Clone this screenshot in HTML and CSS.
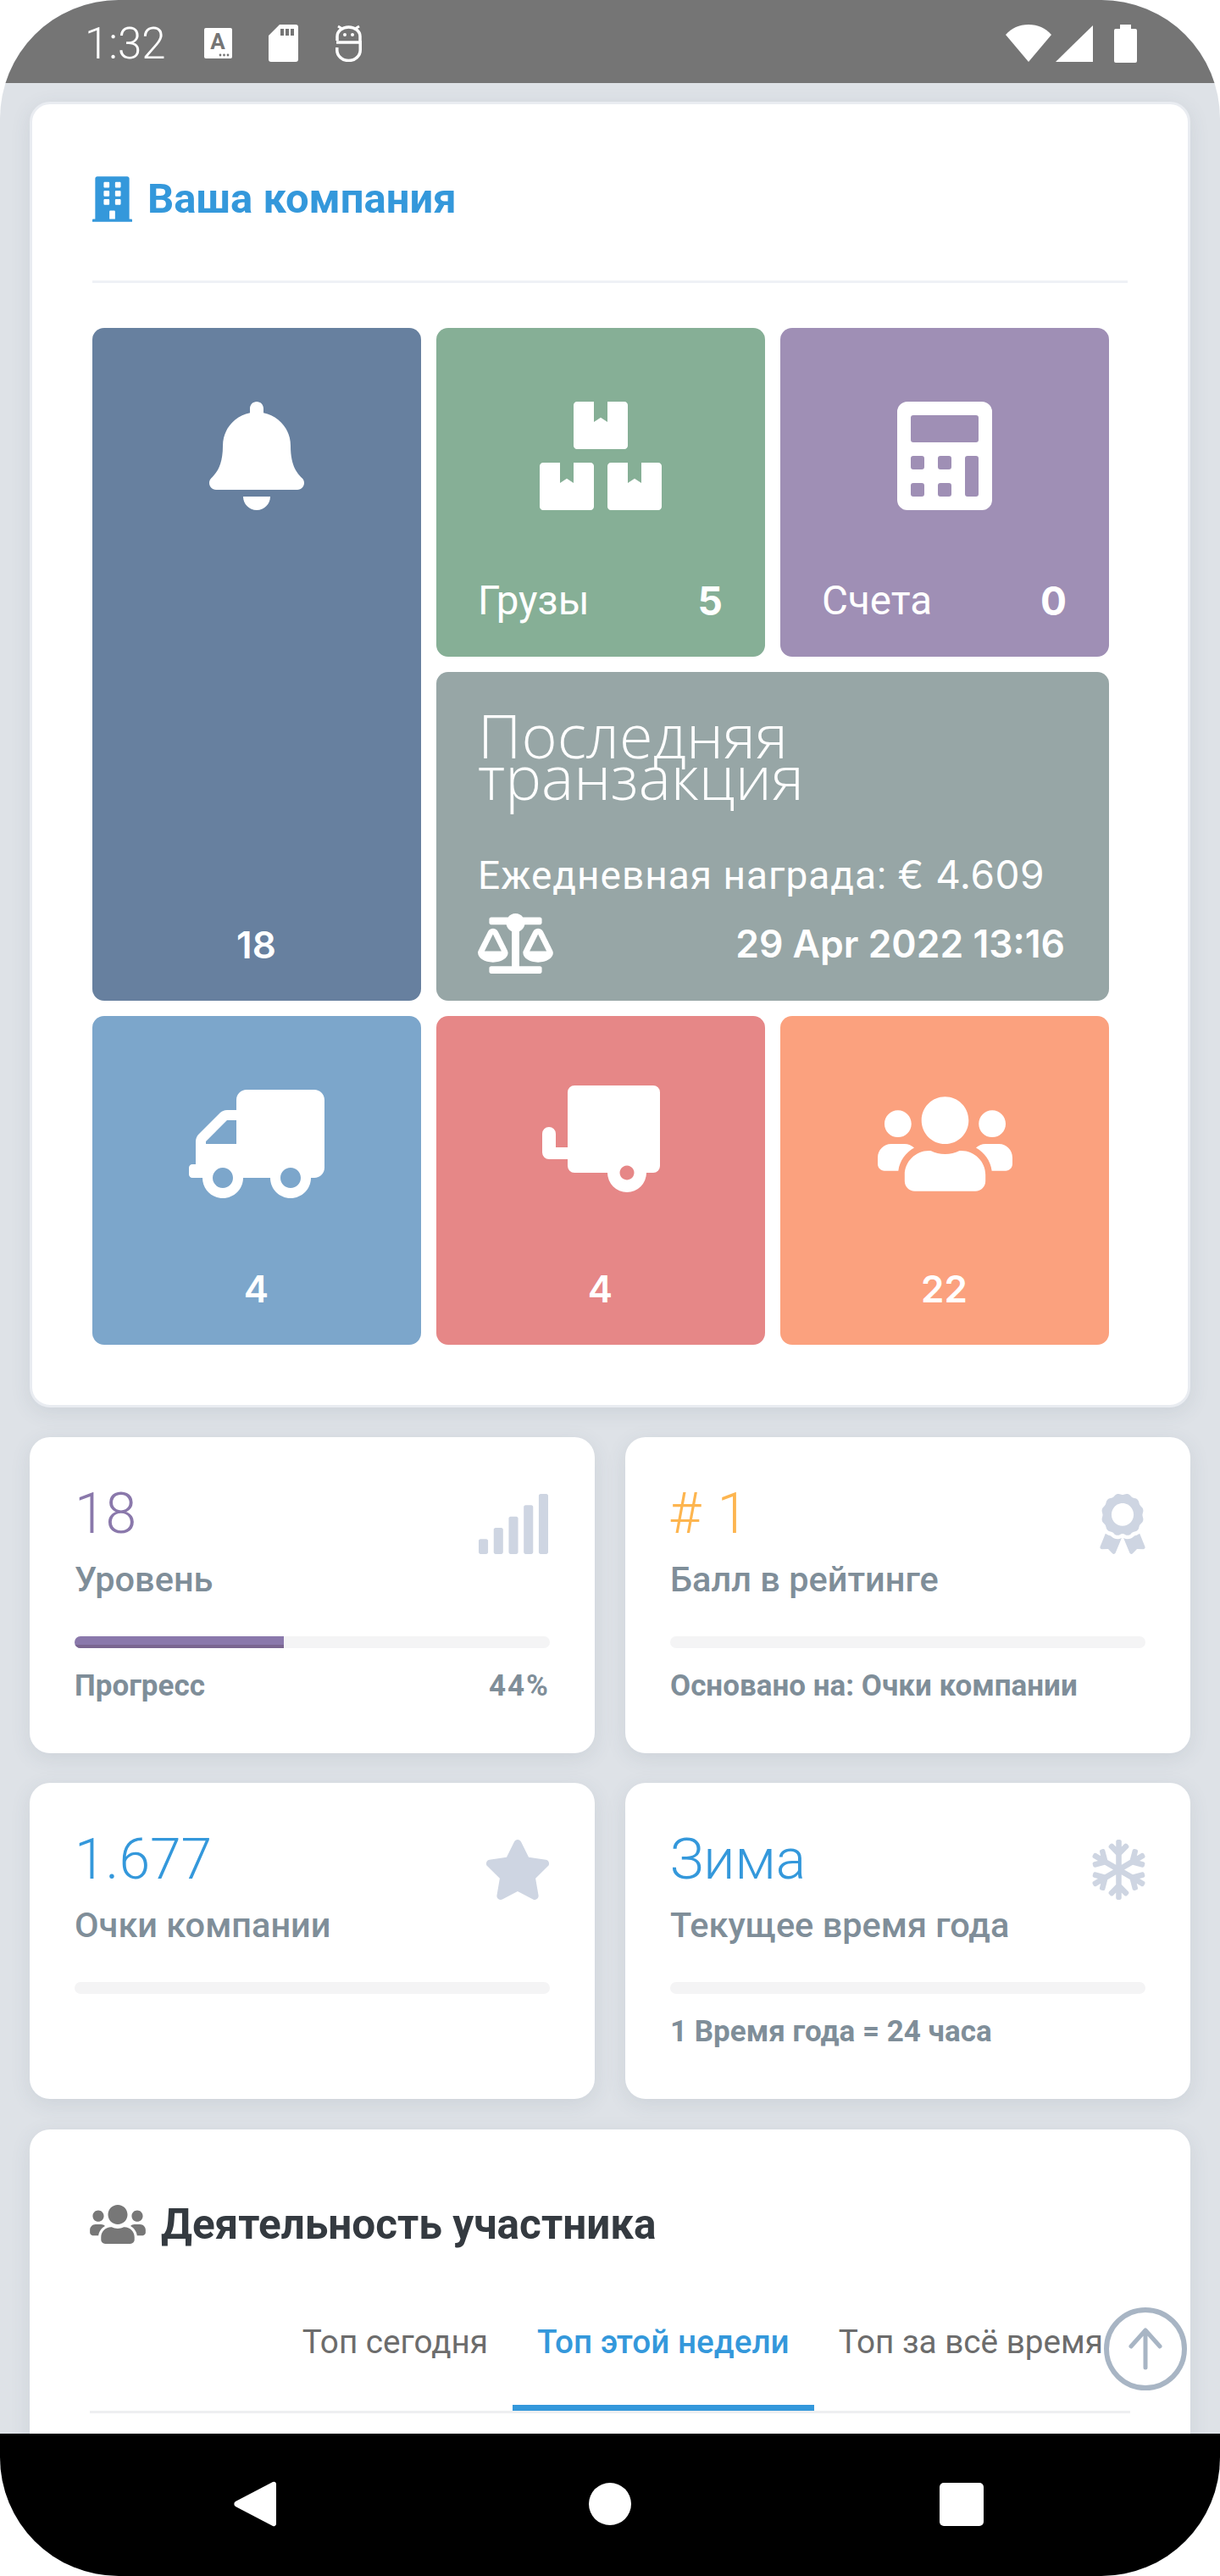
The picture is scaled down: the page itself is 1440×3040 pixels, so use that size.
FILE: index.html
```html
<!DOCTYPE html>
<html lang="ru">
<head>
    <meta charset="UTF-8">
    <meta name="viewport" content="width=device-width, initial-scale=1.0">
    <title>Ваша компания</title>
    <link rel="stylesheet" href="styles.css">
</head>
<body>
    <div class="screen">
        <!-- Android status bar -->
        <header class="status-bar">
            <div class="status-left">
                <span class="clock">1:32</span>
                <svg class="st-a" viewBox="0 0 33 36"><rect width="33" height="36" rx="2" fill="#fff"/><text x="16" y="25" text-anchor="middle" class="st-a-letter">A</text><circle cx="19" cy="32" r="1.4" fill="#757575"/><circle cx="23.500" cy="32" r="1.4" fill="#757575"/><circle cx="28" cy="32" r="1.4" fill="#757575"/></svg>
                <svg class="st-sd" viewBox="0 0 35 44"><path fill="#fff" fill-rule="evenodd" d="M13 0H32a3 3 0 0 1 3 3V41a3 3 0 0 1-3 3H3a3 3 0 0 1-3-3V13zM14 5V13H18V5zM20 5V13H24V5zM26 5V13H30V5z"/></svg>
                <svg class="st-bot" viewBox="0 0 31 44"><g fill="none" stroke="#fff" stroke-width="3.500"><path d="M2 19V14A13.500 11 0 0 1 29 14V19"/><path d="M1 21H29"/><path d="M1.750 27V30A13.750 12.500 0 0 0 29.250 30V19"/></g><circle cx="11" cy="12" r="2" fill="#fff"/><circle cx="20" cy="12" r="2" fill="#fff"/><path d="M3 2L8 5M28 2L23 5" stroke="#fff" stroke-width="3"/></svg>
            </div>
            <div class="status-right">
                <svg class="st-wifi" viewBox="0 0 54 44"><path fill="#fff" d="M27 44L0 12C7 4 16 0 27 0S47 4 54 12z"/></svg>
                <svg class="st-signal" viewBox="0 0 44 43"><path fill="#fff" d="M0 43L44 0V43z"/></svg>
                <svg class="st-battery" viewBox="0 0 27 45"><path fill="#fff" d="M7 0H20V5H25a2 2 0 0 1 2 2V43a2 2 0 0 1-2 2H2a2 2 0 0 1-2-2V7a2 2 0 0 1 2-2H7z"/></svg>
            </div>
        </header>

        <main class="content">
            <!-- Company -->
            <section class="card company-card">
                <div class="card-title">
                    <svg class="title-icon" viewBox="0 0 448 512"><path fill="#3498db" d="M436 480h-20V24c0-13.255-10.745-24-24-24H56C42.745 0 32 10.745 32 24v456H12c-6.627 0-12 5.373-12 12v20h448v-20c0-6.627-5.373-12-12-12zM128 76c0-6.627 5.373-12 12-12h40c6.627 0 12 5.373 12 12v40c0 6.627-5.373 12-12 12h-40c-6.627 0-12-5.373-12-12V76zm0 96c0-6.627 5.373-12 12-12h40c6.627 0 12 5.373 12 12v40c0 6.627-5.373 12-12 12h-40c-6.627 0-12-5.373-12-12v-40zm52 148h-40c-6.627 0-12-5.373-12-12v-40c0-6.627 5.373-12 12-12h40c6.627 0 12 5.373 12 12v40c0 6.627-5.373 12-12 12zm76 160h-64v-84c0-6.627 5.373-12 12-12h40c6.627 0 12 5.373 12 12v84zm64-172c0 6.627-5.373 12-12 12h-40c-6.627 0-12-5.373-12-12v-40c0-6.627 5.373-12 12-12h40c6.627 0 12 5.373 12 12v40zm0-96c0 6.627-5.373 12-12 12h-40c-6.627 0-12-5.373-12-12v-40c0-6.627 5.373-12 12-12h40c6.627 0 12 5.373 12 12v40zm0-96c0 6.627-5.373 12-12 12h-40c-6.627 0-12-5.373-12-12V76c0-6.627 5.373-12 12-12h40c6.627 0 12 5.373 12 12v40z"/></svg>
                    <h2>Ваша компания</h2>
                </div>
                <div class="tiles">
                    <a class="tile tile-tall tile-navy">
                        <svg class="tile-icon" viewBox="0 0 448 512"><path fill="#fff" d="M224 512c35.32 0 63.97-28.65 63.97-64H160.03c0 35.35 28.65 64 63.97 64zm215.39-149.71c-19.32-20.76-55.47-51.99-55.47-154.29 0-77.7-54.48-139.9-127.94-155.16V32c0-17.67-14.32-32-31.98-32s-31.98 14.33-31.98 32v20.84C118.56 68.1 64.08 130.3 64.08 208c0 102.3-36.15 133.53-55.47 154.29-6 6.45-8.66 14.16-8.61 21.71.11 16.4 12.98 32 32.1 32h383.8c19.12 0 32-15.6 32.1-32 .05-7.55-2.61-15.27-8.61-21.71z"/></svg>
                        <div class="tile-foot tile-foot-center"><b>18</b></div>
                    </a>
                    <a class="tile tile-green">
                        <svg class="tile-icon" viewBox="0 0 576 512"><path fill="#fff" d="M560 288h-80v96l-32-21.3-32 21.3v-96h-80c-8.8 0-16 7.2-16 16v192c0 8.8 7.2 16 16 16h224c8.8 0 16-7.2 16-16V304c0-8.8-7.2-16-16-16zm-384-64h224c8.8 0 16-7.2 16-16V16c0-8.8-7.2-16-16-16h-80v96l-32-21.3L256 96V0h-80c-8.8 0-16 7.2-16 16v192c0 8.800 7.2 16 16 16zm64 64h-80v96l-32-21.3L96 384v-96H16c-8.8 0-16 7.2-16 16v192c0 8.8 7.2 16 16 16h224c8.8 0 16-7.2 16-16V304c0-8.8-7.2-16-16-16z"/></svg>
                        <div class="tile-foot"><span>Грузы</span><b class="num-big">5</b></div>
                    </a>
                    <a class="tile tile-purple">
                        <svg class="tile-icon" viewBox="0 0 448 512"><path fill="#fff" fill-rule="evenodd" d="M48 0H400A48 48 0 0 1 448 48V464A48 48 0 0 1 400 512H48A48 48 0 0 1 0 464V48A48 48 0 0 1 48 0zM76 64a12 12 0 0 0-12 12V180a12 12 0 0 0 12 12H372a12 12 0 0 0 12-12V76a12 12 0 0 0-12-12zM76 256a12 12 0 0 0-12 12V308a12 12 0 0 0 12 12H116a12 12 0 0 0 12-12V268a12 12 0 0 0-12-12zM204 256a12 12 0 0 0-12 12V308a12 12 0 0 0 12 12H244a12 12 0 0 0 12-12V268a12 12 0 0 0-12-12zM332 256a12 12 0 0 0-12 12V436a12 12 0 0 0 12 12H372a12 12 0 0 0 12-12V268a12 12 0 0 0-12-12zM76 384a12 12 0 0 0-12 12V436a12 12 0 0 0 12 12H116a12 12 0 0 0 12-12V396a12 12 0 0 0-12-12zM204 384a12 12 0 0 0-12 12V436a12 12 0 0 0 12 12H244a12 12 0 0 0 12-12V396a12 12 0 0 0-12-12z"/></svg>
                        <div class="tile-foot"><span>Счета</span><b class="num-big">0</b></div>
                    </a>
                    <a class="tile tile-wide tile-grey">
                        <div class="tx-title">Последняя<br>транзакция</div>
                        <div class="tx-reward">Ежедневная награда: <i>€ 4.609</i></div>
                        <div class="tx-foot">
                            <svg class="tx-icon" viewBox="0 0 640 512"><path fill="#fff" d="M256 336h-.02c0-16.18 1.34-8.73-85.05-181.51-17.65-35.29-68.19-35.36-85.87 0C-2.06 328.75.02 320.33.02 336H0c0 44.18 57.31 80 128 80s128-35.82 128-80zM128 176l72 144H56l72-144zm511.98 160c0-16.18 1.34-8.73-85.05-181.51-17.65-35.29-68.19-35.36-85.87 0-87.12 174.26-85.04 165.84-85.04 181.51H384c0 44.18 57.31 80 128 80s128-35.82 128-80h-.02zM440 320l72-144 72 144H440zm88 128H352V153.25c23.51-10.29 41.16-31.48 46.39-57.25H528c8.84 0 16-7.16 16-16V48c0-8.84-7.16-16-16-16H383.64C369.04 12.68 346.09 0 320 0s-49.04 12.68-63.64 32H112c-8.84 0-16 7.16-16 16v32c0 8.84 7.16 16 16 16h129.61c5.23 25.76 22.87 46.96 46.39 57.25V448H112c-8.84 0-16 7.16-16 16v32c0 8.84 7.16 16 16 16h416c8.84 0 16-7.16 16-16v-32c0-8.84-7.16-16-16-16z"/></svg>
                            <b>29 Apr 2022 13:16</b>
                        </div>
                    </a>
                    <a class="tile tile-blue">
                        <svg class="tile-icon icon-truck" viewBox="0 0 640 512"><path fill="#fff" d="M624 352h-16V243.9c0-12.7-5.1-24.9-14.1-33.9L494 110.1c-9-9-21.2-14.1-33.9-14.1H416V48c0-26.5-21.5-48-48-48H48C21.5 0 0 21.5 0 48v320c0 26.5 21.5 48 48 48h16c0 53 43 96 96 96s96-43 96-96h128c0 53 43 96 96 96s96-43 96-96h48c8.8 0 16-7.2 16-16v-32c0-8.8-7.2-16-16-16zM160 464c-26.5 0-48-21.5-48-48s21.5-48 48-48 48 21.5 48 48-21.5 48-48 48zm320 0c-26.5 0-48-21.5-48-48s21.5-48 48-48 48 21.500 48 48-21.5 48-48 48zm80-208H416V144h44.1l99.9 99.9V256z"/></svg>
                        <div class="tile-foot tile-foot-center"><b>4</b></div>
                    </a>
                    <a class="tile tile-red">
                        <svg class="tile-icon icon-trailer" viewBox="0 0 139 126"><path fill="#fff" fill-rule="evenodd" d="M38 0H131a8 8 0 0 1 8 8V95a8 8 0 0 1-8 8H123A23 23 0 0 1 77 103H38a8 8 0 0 1-8-8V87H8a8 8 0 0 1-8-8V57a8 8 0 0 1 16 0V73H30V8a8 8 0 0 1 8-8zM100 94.500a8.500 8.500 0 1 0 .01 0z"/></svg>
                        <div class="tile-foot tile-foot-center"><b>4</b></div>
                    </a>
                    <a class="tile tile-orange">
                        <svg class="tile-icon icon-users" viewBox="0 32 640 448"><path fill="#fff" d="M96 224c35.3 0 64-28.7 64-64s-28.7-64-64-64-64 28.7-64 64 28.7 64 64 64zm448 0c35.3 0 64-28.7 64-64s-28.7-64-64-64-64 28.7-64 64 28.7 64 64 64zm32 32h-64c-17.6 0-33.5 7.1-45.1 18.6 40.3 22.1 68.9 62 75.1 109.4h66c17.7 0 32-14.3 32-32v-32c0-35.3-28.7-64-64-64zm-256 0c61.9 0 112-50.1 112-112S381.9 32 320 32 208 82.1 208 144s50.1 112 112 112zm76.8 32h-8.3c-20.8 10-43.9 16-68.5 16s-47.6-6-68.5-16h-8.3C179.6 288 128 339.6 128 403.2V432c0 26.5 21.5 48 48 48h288c26.5 0 48-21.5 48-48v-28.8c0-63.6-51.6-115.2-115.2-115.2zm-223.7-13.4C161.5 263.1 145.6 256 128 256H64c-35.3 0-64 28.7-64 64v32c0 17.7 14.3 32 32 32h65.9c6.3-47.4 34.9-87.3 75.2-109.4z"/></svg>
                        <div class="tile-foot tile-foot-center"><b>22</b></div>
                    </a>
                </div>
            </section>

            <!-- Stats -->
            <div class="stats">
                <section class="card stat">
                    <div class="stat-top">
                        <div>
                            <div class="stat-value c-purple">18</div>
                            <div class="stat-label">Уровень</div>
                        </div>
                        <svg class="stat-icon icon-signal" viewBox="24 0 592 512"><path fill="#ced5e2" d="M216 288h-48c-8.84 0-16 7.16-16 16v192c0 8.84 7.16 16 16 16h48c8.84 0 16-7.16 16-16V304c0-8.84-7.16-16-16-16zM88 384H40c-8.84 0-16 7.16-16 16v96c0 8.84 7.16 16 16 16h48c8.84 0 16-7.16 16-16v-96c0-8.84-7.16-16-16-16zm256-192h-48c-8.84 0-16 7.16-16 16v288c0 8.84 7.16 16 16 16h48c8.84 0 16-7.16 16-16V208c0-8.84-7.16-16-16-16zm128-96h-48c-8.84 0-16 7.16-16 16v384c0 8.84 7.16 16 16 16h48c8.84 0 16-7.16 16-16V112c0-8.84-7.16-16-16-16zM600 0h-48c-8.84 0-16 7.16-16 16v480c0 8.84 7.16 16 16 16h48c8.84 0 16-7.16 16-16V16c0-8.84-7.16-16-16-16z"/></svg>
                    </div>
                    <div class="progress"><div class="progress-fill" style="width: 44%"></div></div>
                    <div class="stat-foot"><span>Прогресс</span><span class="pct">44%</span></div>
                </section>
                <section class="card stat">
                    <div class="stat-top">
                        <div>
                            <div class="stat-value c-orange"># 1</div>
                            <div class="stat-label">Балл в рейтинге</div>
                        </div>
                        <svg class="stat-icon icon-award" viewBox="0 0 384 512"><path fill="#ced5e2" d="M97.12 362.63c-8.69-8.69-4.16-6.24-25.12-11.85-9.51-2.55-17.87-7.45-25.43-13.32L1.2 448.7c-4.39 10.77 3.81 22.47 15.43 22.03l52.69-2.01L105.56 507c8 8.44 22.04 5.81 26.43-4.96l52.05-127.62c-10.84 6.04-22.87 9.58-35.31 9.58-19.5 0-37.82-7.59-51.61-21.37zM382.8 448.7l-45.37-111.24c-7.56 5.88-15.92 10.77-25.43 13.32-21.07 5.64-16.45 3.18-25.12 11.85-13.79 13.78-32.12 21.37-51.62 21.37-12.44 0-24.47-3.55-35.31-9.58L252 502.04c4.39 10.77 18.44 13.4 26.43 4.96l36.25-38.28 52.69 2.01c11.62.44 19.82-11.27 15.43-22.03zM263 340c15.28-15.55 17.03-14.21 38.79-20.14 13.89-3.79 24.75-14.84 28.47-28.98 7.48-28.4 5.54-24.97 25.95-45.75 10.17-10.35 14.14-25.44 10.42-39.58-7.47-28.38-7.48-24.42 0-52.83 3.72-14.14-.25-29.23-10.42-39.58-20.41-20.78-18.47-17.36-25.95-45.75-3.72-14.14-14.58-25.19-28.47-28.98-27.88-7.61-24.52-5.62-44.95-26.41-10.17-10.35-25-14.4-38.89-10.61-27.87 7.6-23.98 7.61-51.9 0-13.89-3.79-28.72.25-38.89 10.61-20.41 20.78-17.05 18.8-44.94 26.41-13.89 3.79-24.75 14.84-28.47 28.98-7.47 28.39-5.54 24.97-25.95 45.75-10.17 10.35-14.15 25.44-10.42 39.58 7.47 28.36 7.48 24.4 0 52.82-3.72 14.14.25 29.23 10.42 39.59 20.41 20.78 18.47 17.35 25.95 45.75 3.72 14.14 14.58 25.19 28.47 28.98C104.6 325.96 106.27 325 121 340c13.23 13.47 33.84 15.88 49.74 5.82a39.676 39.676 0 0 1 42.53 0c15.89 10.06 36.5 7.65 49.73-5.82zM97.66 175.96c0-53.03 42.24-96.02 94.34-96.02s94.34 42.99 94.34 96.02-42.24 96.02-94.34 96.02-94.34-42.99-94.34-96.02z"/></svg>
                    </div>
                    <div class="progress"></div>
                    <div class="stat-foot"><span>Основано на: Очки компании</span></div>
                </section>
                <section class="card stat">
                    <div class="stat-top">
                        <div>
                            <div class="stat-value c-blue">1.677</div>
                            <div class="stat-label">Очки компании</div>
                        </div>
                        <svg class="stat-icon icon-star" viewBox="0 0 576 512"><path fill="#ced5e2" d="M259.3 17.8L194 150.2 47.9 171.5c-26.2 3.8-36.7 36.1-17.7 54.6l105.7 103-25 145.5c-4.5 26.3 23.2 46 46.4 33.7L288 439.6l130.7 68.7c23.2 12.2 50.9-7.4 46.4-33.7l-25-145.5 105.7-103c19-18.5 8.5-50.8-17.7-54.6L382 150.2 316.7 17.8c-11.7-23.6-45.6-23.9-57.4 0z"/></svg>
                    </div>
                    <div class="progress"></div>
                </section>
                <section class="card stat">
                    <div class="stat-top">
                        <div>
                            <div class="stat-value c-blue">Зима</div>
                            <div class="stat-label">Текущее время года</div>
                        </div>
                        <svg class="stat-icon icon-snow" viewBox="0 0 448 512"><path fill="#ced5e2" d="M440.1 355.2l-39.2-23 34.1-9.3c8.4-2.3 13.4-11.1 11.1-19.6l-4.1-15.5c-2.2-8.5-10.9-13.6-19.3-11.3L343 298.2 271.2 256l71.9-42.2 79.7 21.7c8.4 2.3 17-2.8 19.3-11.3l4.1-15.5c2.2-8.5-2.7-17.3-11.1-19.6l-34.1-9.3 39.2-23c7.5-4.4 10.1-14.2 5.8-21.9l-7.9-13.9c-4.3-7.7-14-10.3-21.5-5.9l-39.2 23 9.1-34.7c2.2-8.5-2.7-17.3-11.1-19.6l-15.2-4.1c-8.4-2.3-17 2.8-19.3 11.3l-21.3 81-71.9 42.2v-84.5L306 70.4c6.1-6.2 6.1-16.4 0-22.6l-11.1-11.3c-6.1-6.2-16.1-6.2-22.2 0l-24.9 25.4V16c0-8.8-7-16-15.7-16h-15.7c-8.7 0-15.7 7.2-15.7 16v46.1l-24.9-25.4c-6.1-6.2-16.1-6.2-22.2 0L142.1 48c-6.1 6.2-6.1 16.4 0 22.6l58.3 59.3v84.5l-71.9-42.2-21.3-81c-2.2-8.5-10.9-13.6-19.3-11.3L72.7 84c-8.4 2.3-13.4 11.1-11.1 19.6l9.1 34.7-39.2-23c-7.5-4.4-17.1-1.8-21.5 5.9l-7.9 13.9c-4.3 7.7-1.8 17.5 5.8 21.9l39.2 23-34.1 9.1c-8.4 2.3-13.4 11.1-11.1 19.6L6 224.2c2.2 8.5 10.9 13.6 19.3 11.3l79.7-21.7 71.9 42.2-71.9 42.2-79.7-21.7c-8.4-2.3-17 2.8-19.3 11.3l-4.1 15.5c-2.2 8.5 2.7 17.3 11.1 19.6l34.1 9.3-39.2 23c-7.5 4.4-10.1 14.2-5.8 21.9L10 391c4.3 7.7 14 10.3 21.5 5.9l39.2-23-9.1 34.7c-2.2 8.5 2.7 17.3 11.1 19.6l15.2 4.1c8.4 2.3 17-2.8 19.3-11.3l21.3-81 71.9-42.2v84.5l-58.3 59.3c-6.1 6.2-6.1 16.4 0 22.6l11.1 11.3c6.1 6.2 16.1 6.2 22.2 0l24.9-25.4V496c0 8.8 7 16 15.7 16h15.7c8.7 0 15.7-7.2 15.7-16v-46.1l24.9 25.4c6.1 6.2 16.1 6.2 22.2 0l11.1-11.3c6.1-6.2 6.1-16.4 0-22.6l-58.3-59.3v-84.5l71.9 42.2 21.3 81c2.2 8.5 10.9 13.6 19.3 11.3L375 428c8.4-2.3 13.4-11.1 11.1-19.6l-9.1-34.7 39.2 23c7.5 4.4 17.1 1.8 21.5-5.9l7.9-13.9c4.6-7.5 2.1-17.3-5.5-21.7z"/></svg>
                    </div>
                    <div class="progress"></div>
                    <div class="stat-foot"><span>1 Время года = 24 часа</span></div>
                </section>
            </div>

            <!-- Members -->
            <section class="card members">
                <div class="members-title">
                    <svg class="members-icon" viewBox="0 32 640 448"><path fill="#777" d="M96 224c35.3 0 64-28.7 64-64s-28.7-64-64-64-64 28.7-64 64 28.7 64 64 64zm448 0c35.3 0 64-28.7 64-64s-28.7-64-64-64-64 28.7-64 64 28.7 64 64 64zm32 32h-64c-17.6 0-33.5 7.1-45.1 18.6 40.3 22.1 68.9 62 75.1 109.4h66c17.7 0 32-14.3 32-32v-32c0-35.3-28.7-64-64-64zm-256 0c61.9 0 112-50.1 112-112S381.9 32 320 32 208 82.1 208 144s50.1 112 112 112zm76.8 32h-8.3c-20.8 10-43.9 16-68.5 16s-47.6-6-68.5-16h-8.3C179.6 288 128 339.6 128 403.2V432c0 26.5 21.5 48 48 48h288c26.5 0 48-21.5 48-48v-28.8c0-63.6-51.6-115.2-115.2-115.2zm-223.7-13.4C161.5 263.1 145.6 256 128 256H64c-35.3 0-64 28.7-64 64v32c0 17.7 14.3 32 32 32h65.9c6.3-47.4 34.9-87.3 75.2-109.4z"/></svg>
                    <h2>Деятельность участника</h2>
                </div>
                <nav class="tabs">
                    <a class="tab">Топ сегодня</a>
                    <a class="tab tab-active">Топ этой недели</a>
                    <a class="tab">Топ за всё время</a>
                </nav>
            </section>
        </main>

        <!-- Back to top -->
        <a class="to-top">
            <svg viewBox="0 0 40 50"><path d="M20 47V3M3 22L20 3L37 22" fill="none" stroke="#a8b5c4" stroke-width="5" stroke-linecap="round" stroke-linejoin="round"/></svg>
        </a>

        <!-- Android nav bar -->
        <footer class="nav-bar">
            <svg class="nav-back" viewBox="0 0 50 54"><path fill="#fff" d="M46 1a3 3 0 0 1 4 2V51a3 3 0 0 1-4 2L2 30a3.500 3.500 0 0 1 0-6z"/></svg>
            <span class="nav-home"></span>
            <span class="nav-recent"></span>
        </footer>
    </div>
</body>
</html>
```

FILE: styles.css
```css
* {
    box-sizing: border-box;
}
body {
    margin: 0;
    background: #fff;
    font-family: Roboto, "Noto Sans", sans-serif;
}
svg {
    display: block;
    flex: none;
}
h2 {
    margin: 0;
    font-weight: 700;
}
.screen {
    position: relative;
    width: 1440px;
    height: 3040px;
    display: flex;
    flex-direction: column;
    overflow: hidden;
    border-radius: 140px;
    background: #dee2e7;
}

/* status bar */
.status-bar {
    flex: none;
    height: 98px;
    padding: 4px 98px 0 100px;
    display: flex;
    justify-content: space-between;
    align-items: center;
    background: #757575;
}
.status-left,
.status-right {
    display: flex;
    align-items: center;
}
.clock {
    width: 92px;
    color: #fff;
    font-size: 51px;
    font-weight: 300;
    line-height: 1;
}
.st-a {
    width: 33px;
    height: 36px;
    margin-left: 49px;
}
.st-a-letter {
    fill: #757575;
    font-family: Roboto, sans-serif;
    font-size: 26px;
    font-weight: 700;
}
.st-sd {
    width: 35px;
    height: 44px;
    margin-left: 43px;
}
.st-bot {
    width: 31px;
    height: 44px;
    margin-left: 44px;
}
.st-wifi {
    width: 54px;
    height: 44px;
}
.st-signal {
    width: 44px;
    height: 43px;
    margin-left: 5px;
}
.st-battery {
    width: 27px;
    height: 45px;
    margin-left: 25px;
}

/* cards */
.content {
    flex: 1;
    min-height: 0;
    overflow: hidden;
    padding: 22px 35px 0;
}
.card {
    background: #fff;
    border-radius: 24px;
    box-shadow: 0 6px 24px rgba(60, 75, 100, 0.1);
}
.company-card {
    padding: 85px 71px 71px;
    border: 3px solid #e9ecf1;
    margin-bottom: 35px;
}
.card-title {
    display: flex;
    align-items: center;
    gap: 18px;
    padding-bottom: 69px;
    border-bottom: 3px solid #eff1f6;
    margin-bottom: 53px;
}
.title-icon {
    width: 47px;
    height: 54px;
}
.card-title h2 {
    color: #3498db;
    font-size: 49px;
    line-height: 54px;
}

/* tiles */
.tiles {
    display: grid;
    grid-template-columns: repeat(3, 388px);
    grid-template-rows: repeat(3, 388px);
    gap: 18px;
}
.tile {
    display: flex;
    flex-direction: column;
    align-items: center;
    padding-top: 87px;
    border-radius: 14px;
    color: #fff;
}
.tile-tall {
    grid-row: span 2;
}
.tile-wide {
    grid-column: span 2;
    align-items: stretch;
    padding: 50px 52px 0 49px;
}
.tile-navy { background: #67809f; }
.tile-green { background: #86af96; }
.tile-purple { background: #9f8fb5; }
.tile-grey { background: #97a6a6; }
.tile-blue { background: #7ca6cb; }
.tile-red { background: #e68787; }
.tile-orange { background: #fba17e; }
.tile-icon {
    height: 128px;
}
.icon-truck {
    transform: scaleX(-1);
}
.icon-trailer {
    width: 139px;
    height: 126px;
    margin-top: -5px;
}
.icon-users {
    width: 159px;
    height: 112px;
    margin-top: 8px;
}
.tile-foot {
    align-self: stretch;
    margin-top: auto;
    padding: 0 50px 36px 49px;
    display: flex;
    justify-content: space-between;
    align-items: center;
    height: 96px;
    font-size: 47.500px;
    line-height: 60px;
}
.tile-foot-center {
    justify-content: center;
}
.tile-foot b,
.tx-foot b {
    font-family: Inter, sans-serif;
    font-size: 44px;
    font-weight: 600;
}
.tile-foot .num-big {
    font-size: 46px;
    font-weight: 700;
}
.tx-foot b {
    font-size: 44.500px;
}
.tx-title {
    font-family: "Open Sans", sans-serif;
    font-size: 72px;
    font-weight: 300;
    line-height: 49px;
}
.tx-reward {
    margin-top: 61px;
    font-size: 46px;
    line-height: 60px;
    letter-spacing: 1px;
}
.tx-reward i {
    font-family: Inter, sans-serif;
    font-style: normal;
    font-weight: 400;
    letter-spacing: 0.500px;
}
.tx-foot {
    display: flex;
    justify-content: space-between;
    align-items: center;
    margin-top: 15px;
}
.tx-icon {
    width: 89px;
    height: 71px;
}

/* stat cards */
.stats {
    display: grid;
    grid-template-columns: 667px 667px;
    grid-auto-rows: 373px;
    column-gap: 36px;
    row-gap: 35px;
    margin-bottom: 36px;
}
.stat {
    padding: 67px 53px 0;
}
.stat-top {
    display: flex;
    justify-content: space-between;
    align-items: flex-start;
}
.stat-value {
    font-size: 66px;
    font-weight: 300;
    line-height: 48px;
}
.c-purple { color: #8a78ab; }
.c-orange {
    color: #fdb54f;
    margin-left: -2px;
    word-spacing: 3px;
}
.c-blue { color: #3498db; }
.stat-label {
    margin-top: 33px;
    color: #7f8e99;
    font-size: 41.500px;
    font-weight: 500;
    line-height: 40px;
}
.stat-icon {
    height: 71px;
}
.icon-signal { width: 82px; margin-right: 2px; }
.icon-award { width: 54px; }
.icon-star { width: 80px; margin-right: -2px; }
.icon-snow { width: 63px; }
.progress {
    height: 14px;
    margin-top: 47px;
    overflow: hidden;
    border-radius: 7px;
    background: #f4f4f5;
}
.progress-fill {
    height: 100%;
    background: #8a78ab;
    border-bottom: 4px solid #7a6690;
}
.stat-foot {
    display: flex;
    justify-content: space-between;
    margin-top: 25px;
    color: #7f8e99;
    font-size: 35px;
    font-weight: 700;
    line-height: 40px;
}
.pct {
    letter-spacing: 2px;
}

/* members */
.members {
    padding: 89px 71px 71px;
}
.members-title {
    display: flex;
    align-items: center;
    gap: 18px;
}
.members-icon {
    width: 66px;
    height: 46px;
}
.members-title h2 {
    color: #343a40;
    font-size: 49.500px;
    line-height: 46px;
}
.tabs {
    display: flex;
    justify-content: flex-end;
    margin-top: 92px;
    padding-right: 3px;
    border-bottom: 3px solid #eeeff1;
}
.tab {
    padding: 0 29px 50px;
    border-bottom: 7px solid transparent;
    color: #6c6c6c;
    font-size: 38.700px;
    line-height: 48px;
}
.tab-active {
    color: #3498db;
    font-weight: 500;
    border-bottom-color: #3498db;
}

/* floating button */
.to-top {
    position: absolute;
    left: 1303px;
    top: 2723px;
    width: 98px;
    height: 98px;
    display: flex;
    align-items: center;
    justify-content: center;
    border: 6px solid #a8b5c4;
    border-radius: 50%;
}
.to-top svg {
    width: 40px;
    height: 50px;
}

/* nav bar */
.nav-bar {
    flex: none;
    height: 168px;
    padding-right: 4px;
    display: flex;
    align-items: flex-start;
    justify-content: center;
    background: #000;
}
.nav-back {
    width: 50px;
    height: 54px;
    margin-top: 56px;
}
.nav-home {
    width: 50px;
    height: 50px;
    margin: 58px 0 0 369px;
    border-radius: 50%;
    background: #fff;
}
.nav-recent {
    width: 52px;
    height: 51px;
    margin: 58px 0 0 364px;
    border-radius: 5px;
    background: #fff;
}
```
